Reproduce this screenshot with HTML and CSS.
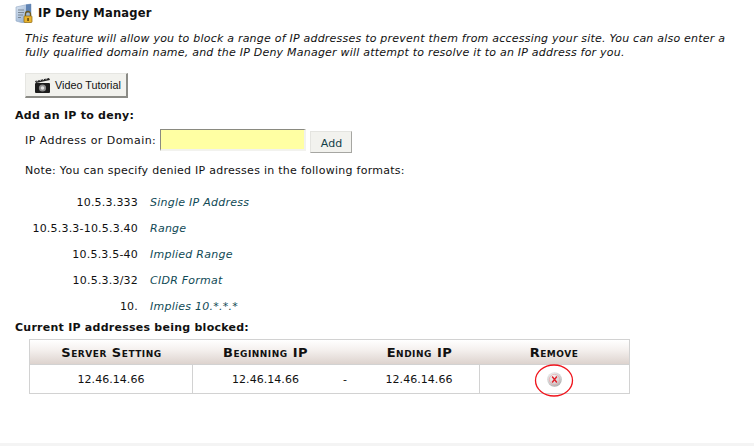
FILE: index.html
```html
<!DOCTYPE html>
<html lang="en">
<head>
<meta charset="utf-8">
<title>IP Deny Manager</title>
<link rel="stylesheet" href="styles.css">
</head>
<body>
<div class="page">
  <header class="title-row">
    <svg class="title-icon" width="18" height="20" viewBox="0 0 18 20">
      <defs><linearGradient id="doc" x1="0" y1="0" x2="1" y2="1"><stop offset="0" stop-color="#dfe8f3"/><stop offset="1" stop-color="#7f9fc6"/></linearGradient></defs>
      <path d="M1 4 L10 2 L16 1 V17 L8 20 L1 18 Z" fill="url(#doc)" stroke="#8ea6c4" stroke-width=".6"/>
      <path d="M11 1.5 L16 1 V9 L11 10 Z" fill="#5f83b3"/>
      <path d="M3 7h6M3 9.500h6M3 12h5M3 14.500h3" stroke="#7b8794" stroke-width="1"/>
      <path d="M10.500 13 v-2 a2.500 2.500 0 0 1 5 0 v2" fill="none" stroke="#6f5a1e" stroke-width="1.300"/>
      <rect x="9" y="13" width="8" height="6.500" rx=".8" fill="#e8b32e" stroke="#8a6510" stroke-width=".7"/>
      <rect x="12.300" y="15" width="1.500" height="3" fill="#5c430b"/>
    </svg>
    <h1 class="title">IP Deny Manager</h1>
  </header>
  <p class="intro">This feature will allow you to block a range of IP addresses to prevent them from accessing your site. You can also enter a fully qualified domain name, and the IP Deny Manager will attempt to resolve it to an IP address for you.</p>
  <button class="video-btn" type="button">
    <svg width="17" height="16" viewBox="0 0 17 16">
      <path d="M1 4 L15 1 L16 3 L2 6 Z" fill="#222"/>
      <path d="M3 4.500 L4 2.800M6 3.900 L7 2.200M9 3.200 L10 1.600M12 2.600 L13 1.100" stroke="#ddd" stroke-width="1"/>
      <rect x="1" y="6" width="15" height="10" rx="1" fill="#1c1c1c"/>
      <circle cx="8.500" cy="11" r="3.600" fill="#8d8d8d"/>
      <circle cx="8.500" cy="11" r="1.800" fill="#dedede"/>
    </svg>
    <span>Video Tutorial</span>
  </button>
  <h2 class="section add-heading">Add an IP to deny:</h2>
  <form class="add-form">
    <label class="add-label" for="ip">IP Address or Domain:</label>
    <input class="add-input" id="ip" type="text">
    <button class="add-btn" type="button">Add</button>
  </form>
  <p class="note">Note: You can specify denied IP adresses in the following formats:</p>
  <dl class="formats">
    <div class="format"><dt>10.5.3.333</dt><dd>Single IP Address</dd></div>
    <div class="format"><dt>10.5.3.3-10.5.3.40</dt><dd>Range</dd></div>
    <div class="format"><dt>10.5.3.5-40</dt><dd>Implied Range</dd></div>
    <div class="format"><dt>10.5.3.3/32</dt><dd>CIDR Format</dd></div>
    <div class="format"><dt>10.</dt><dd>Implies 10.*.*.*</dd></div>
  </dl>
  <h2 class="section blocked-heading">Current IP addresses being blocked:</h2>
  <div class="table-wrap">
    <table class="blocked">
      <thead>
        <tr><th class="c1">Server Setting</th><th class="c2">Beginning IP</th><th class="c3"></th><th class="c4">Ending IP</th><th class="c5">Remove</th></tr>
      </thead>
      <tbody>
        <tr>
          <td class="c1 divided">12.46.14.66</td>
          <td class="c2">12.46.14.66</td>
          <td class="c3">-</td>
          <td class="c4 divided">12.46.14.66</td>
          <td class="c5">
            <svg class="remove-icon" width="15" height="15" viewBox="0 0 14 14">
              <defs><radialGradient id="ball" cx=".4" cy=".3" r=".8"><stop offset="0" stop-color="#f6f6f6"/><stop offset=".65" stop-color="#cfcfcf"/><stop offset="1" stop-color="#9a9a9a"/></radialGradient></defs>
              <circle cx="7" cy="7" r="6.800" fill="url(#ball)"/>
              <circle cx="7" cy="7" r="4.800" fill="none" stroke="#e8a0a4" stroke-width=".6"/>
              <path d="M4.800 4.200 L9.200 9.800M9.200 4.200 L4.800 9.800" stroke="#e0202a" stroke-width="1.300"/>
            </svg>
          </td>
        </tr>
      </tbody>
    </table>
    <svg class="annotation" width="40" height="33" viewBox="0 0 40 33"><ellipse cx="20" cy="16.500" rx="18.500" ry="15.500" fill="none" stroke="#f0141c" stroke-width="1.300"/></svg>
  </div>
</div>
<div class="footer-band"></div>
</body>
</html>
```
FILE: styles.css
```css
html, body { margin: 0; padding: 0; background: #fff; }
body { width: 754px; height: 446px; overflow: hidden; display: flex; flex-direction: column; font-family: "DejaVu Sans", Verdana, sans-serif; font-size: 11px; color: #111; }
.page { flex: 1; padding: 3px 0 0 15px; }
.title-row { display: flex; align-items: center; gap: 5px; height: 20px; }
.title { margin: 0; font-size: 11.500px; letter-spacing: .2px; font-weight: bold; line-height: 20px; color: #111; }
.title-icon { display: block; }
.intro { margin: 9px 0 0 10px; width: 706px; font-size: 11px; letter-spacing: .22px; font-style: italic; line-height: 14px; }
.video-btn { display: flex; align-items: center; gap: 4px; margin: 13px 0 0 10px; width: 103px; height: 25px; padding: 0 0 0 8px; background: #f2f2ee; border: 1px solid #e6e6e2; border-right: 2px solid #8b8b86; border-bottom: 2px solid #8b8b86; font-family: "Liberation Sans", Arial, sans-serif; font-size: 10.800px; white-space: nowrap; color: #111; box-sizing: border-box; }
.section { margin: 0; font-size: 11px; font-weight: bold; letter-spacing: .25px; line-height: 14px; color: #111; }
.add-heading { margin-top: 11px; }
.add-form { display: flex; align-items: flex-start; margin: 6px 0 0 10px; }
.add-label { line-height: 24px; width: 135px; font-size: 11px; letter-spacing: .45px; white-space: nowrap; }
.add-input { width: 146px; height: 22px; box-sizing: border-box; padding: 0; background: #ffffa3; border: 2px solid #f2f2ee; border-top-color: #8a8a80; border-left-color: #8a8a80; border-top-width: 1px; border-left-width: 1px; border-radius: 0; outline: 0; }
.add-btn { width: 42px; height: 22px; margin: 2px 0 0 4px; padding: 2px 0 0 1px; background: #f2f2ee; border: 1px solid #e4e4e0; border-right-color: #a6a6a2; border-bottom-color: #a6a6a2; font-family: "DejaVu Sans", Verdana, sans-serif; font-size: 11px; color: #123f48; box-sizing: border-box; }
.note { margin: 11px 0 0 10px; font-size: 11px; line-height: 14px; letter-spacing: .27px; }
.formats { margin: 12px 0 0; }
.format { display: flex; height: 26px; line-height: 14px; padding-top: 6px; box-sizing: border-box; }
.format dt { width: 123px; text-align: right; font-size: 11px; letter-spacing: .2px; }
.format dd { margin: 0 0 0 12px; font-size: 11px; font-style: italic; color: #104a56; letter-spacing: .25px; }
.blocked-heading { margin-top: 1px; }
.table-wrap { position: relative; margin: 4px 0 0 14px; width: 601px; }
.blocked { width: 601px; table-layout: fixed; border-collapse: separate; border-spacing: 0; border: 1px solid #d2d2d2; }
.blocked th { height: 24px; padding: 0; font-size: 13px; letter-spacing: .5px; font-variant: small-caps; font-weight: bold; color: #111; background: linear-gradient(#ffffff, #f5f1ef 40%, #ddd3ce); text-align: center; }
.blocked td { height: 28px; padding: 0; font-size: 11px; letter-spacing: .05px; text-align: center; border-top: 1px solid #d2d2d2; }
.blocked .divided { border-right: 1px solid #d2d2d2; }
.blocked .c1 { width: 163px; }
.blocked .c2 { width: 145px; }
.blocked .c3 { width: 14px; }
.blocked .c4 { width: 128px; padding-left: 7px; box-sizing: border-box; }
.blocked .c5 { width: 149px; padding-right: 1px; box-sizing: border-box; }
.remove-icon { display: block; margin: 0 auto; }
.annotation { position: absolute; left: 505px; top: 25px; }
.footer-band { height: 3px; background: #f4f4f4; }
```
